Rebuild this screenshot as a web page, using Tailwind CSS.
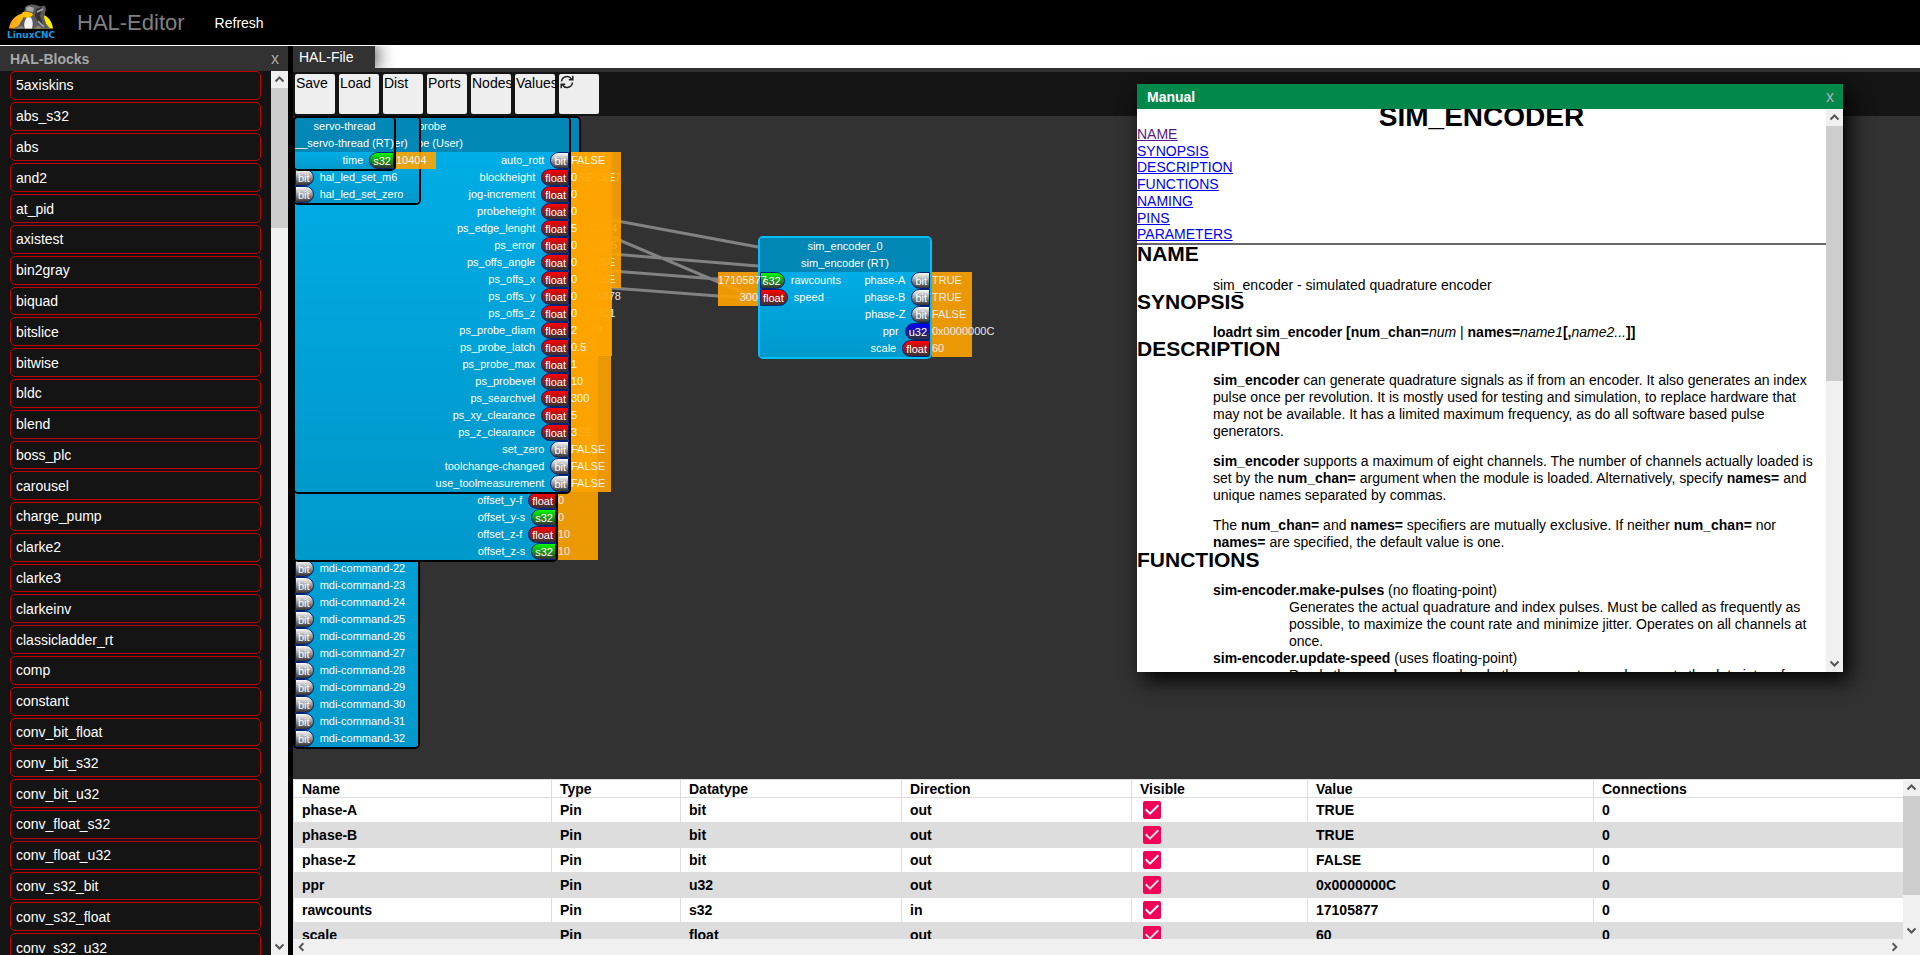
<!DOCTYPE html>
<html lang="en">
<head>
<meta charset="utf-8">
<title>HAL-Editor</title>
<script src="https://cdn.jsdelivr.net/npm/@tailwindcss/browser@4"></script>
</head>
<body class="flex h-screen flex-col overflow-hidden bg-black font-['Liberation_Sans',Arial,sans-serif] text-sm">

<svg class="hidden">
  <symbol id="up" viewBox="0 0 17 17"><path d="M4.500 10.500 8.500 6.500l4 4" fill="none" stroke="#555" stroke-width="2"/></symbol>
  <symbol id="down" viewBox="0 0 17 17"><path d="M4.500 6.500l4 4 4-4" fill="none" stroke="#555" stroke-width="2"/></symbol>
  <symbol id="left" viewBox="0 0 17 17"><path d="M10.500 4.500l-4 4 4 4" fill="none" stroke="#555" stroke-width="2"/></symbol>
  <symbol id="right" viewBox="0 0 17 17"><path d="M6.500 4.500l4 4-4 4" fill="none" stroke="#555" stroke-width="2"/></symbol>
</svg>

<header class="flex h-[46px] shrink-0 items-center border-b border-white bg-black">
  <svg class="ml-[6px] h-[45px] w-[52px]" viewBox="6 0 52 45" role="img" aria-label="LinuxCNC">
    <defs><linearGradient id="sun"><stop offset="0" stop-color="#ffa21a"/><stop offset="1" stop-color="#fff200"/></linearGradient></defs>
    <path d="M9 28.500C10 20 17 12 31 12s21 7 22 16.500z" fill="url(#sun)"/>
    <path d="M14 28.500c2-2 5-2 6-5 0-2 2-3 3-5l2-11c1-2 4-3 7-3 4 0 6 1 8 2l5-1 1 4-2 8 2 6c1 2 3 3 4 5z" fill="#5c5c5c"/>
    <path d="M27 17c-2 3-4 7-2 11.500h7c1-4 1-8-1-11z" fill="#f4f4f4"/>
    <path d="M22 13c2-2 5-1 10 0l1 2c-3 3-7 3-10 2z" fill="#ffc400"/>
    <path d="M26 8c2-2 5-2 8 0l-1 4-6-1z" fill="#a5a5a5"/>
    <path d="M36 9l6-2-2 9 3 8-5-2-3-6z" fill="#333"/>
    <path d="M38 21l6 6M37 12l6-3" stroke="#aaa" stroke-width="1.500"/>
    <path d="M14 28.500l7-3 4 3zM34 28.500l4-3 5 3z" fill="#888"/>
    <text x="7" y="38" font-family="DejaVu Sans" font-weight="bold" font-size="9" fill="#159be0">LinuxCNC</text>
  </svg>
  <h1 class="ml-[19px] text-[22px] leading-6 text-[#808080]">HAL-Editor</h1>
  <button class="ml-[30px] text-sm leading-4 text-white">Refresh</button>
</header>

<div class="flex min-h-0 flex-1">

  <aside class="flex w-[293px] shrink-0 flex-col border-r-[5px] border-black bg-[#141414]">
    <div class="flex h-[25px] shrink-0 items-center justify-between bg-[#323232] pr-[9px] pl-[10px] text-[#a8a8a8]">
      <h2 class="text-sm font-bold">HAL-Blocks</h2>
      <button aria-label="Close blocks" class="text-base leading-4">x</button>
    </div>
    <div class="flex min-h-0 flex-1 overflow-hidden">
      <div id="blocks" class="mx-[10px] grid h-[891px] flex-1 auto-rows-fr gap-[2px]"></div>
      <div class="flex w-[17px] flex-col bg-[#f0f0f0]">
        <svg class="size-[17px]"><use href="#up"/></svg>
        <div class="h-[140px] bg-[#cdcdcd]"></div>
        <svg class="mt-auto size-[17px]"><use href="#down"/></svg>
      </div>
    </div>
  </aside>

  <main class="flex min-w-0 flex-1 flex-col bg-[#323232]">
    <nav class="flex h-[22px] shrink-0 overflow-hidden bg-white">
      <button class="bg-[#323232] pr-[22px] pl-[6px] text-sm leading-[22px] text-white shadow-[0_0_20px_#000]">HAL-File</button>
    </nav>
    <div class="mt-1 flex h-11 shrink-0 gap-1 bg-[#141414] py-[2px] pl-[2px] text-sm leading-4 text-black">
      <button class="flex size-10 rounded-xs bg-[#eee] py-px pl-px">Save</button>
      <button class="flex size-10 rounded-xs bg-[#eee] py-px pl-px">Load</button>
      <button class="flex size-10 rounded-xs bg-[#eee] py-px pl-px">Dist</button>
      <button class="flex size-10 rounded-xs bg-[#eee] py-px pl-px">Ports</button>
      <button class="flex size-10 rounded-xs bg-[#eee] py-px pl-px">Nodes</button>
      <button class="flex size-10 rounded-xs bg-[#eee] py-px pl-px">Values</button>
      <button aria-label="Reload" class="flex size-10 rounded-xs bg-[#eee] py-px pl-px">
        <svg class="h-[14px] w-[14px]" viewBox="0 0 14 14" fill="none" stroke="#222" stroke-width="1.500"><path d="M1.500 6.500a5.500 5.500 0 0 1 10-2.500M12.500 7.500a5.500 5.500 0 0 1-10 2.500M12.800.8v4H8.800M1.200 13.200v-4h4"/></svg>
      </button>
    </div>

    <section id="canvas" class="relative min-h-0 flex-1 overflow-hidden">
      <svg class="absolute inset-0 size-full" stroke="#828282" stroke-width="3">
        <path d="M265 94 319 104 465 131M319 138 465 150M319 121 449 176 465 182M319 155 424 163 465 165M319 172 425 180 465 182" fill="none"/>
      </svg>
    </section>

    <section class="flex h-[176px] shrink-0 flex-col bg-[#f0f0f0]">
      <div class="flex min-h-0 flex-1">
        <div class="min-w-0 flex-1 overflow-hidden bg-white">
          <table class="w-full table-fixed border-collapse border-l border-[#ddd] text-left text-sm font-bold text-black">
            <thead>
              <tr class="h-[18px] border-y border-[#ddd] leading-4">
                <th class="w-[258px] border-r border-[#ddd] px-2">Name</th>
                <th class="w-[129px] border-r border-[#ddd] px-2">Type</th>
                <th class="w-[221px] border-r border-[#ddd] px-2">Datatype</th>
                <th class="w-[230px] border-r border-[#ddd] px-2">Direction</th>
                <th class="w-[176px] border-r border-[#ddd] px-2">Visible</th>
                <th class="w-[286px] border-r border-[#ddd] px-2">Value</th>
                <th class="px-2">Connections</th>
              </tr>
            </thead>
            <tbody id="pins"></tbody>
          </table>
        </div>
        <div class="flex w-[17px] flex-col">
          <svg class="size-[17px]"><use href="#up"/></svg>
          <div class="h-[99px] bg-[#cdcdcd]"></div>
          <svg class="mt-auto size-[17px]"><use href="#down"/></svg>
        </div>
      </div>
      <div class="flex h-4 shrink-0 justify-between pr-[17px]">
        <svg class="h-4 w-[17px]"><use href="#left"/></svg>
        <svg class="h-4 w-[17px]"><use href="#right"/></svg>
      </div>
    </section>
  </main>
</div>

<section role="dialog" aria-labelledby="manual-title" class="absolute top-[84px] right-[77px] flex h-[588px] w-[706px] flex-col bg-white text-black shadow-[6px_8px_20px_#000]">
  <div class="flex h-[25px] shrink-0 items-center justify-between bg-[#02884a] pr-[9px] pl-[10px]">
    <h2 id="manual-title" class="text-sm font-bold text-white">Manual</h2>
    <button aria-label="Close manual" class="text-base leading-4 text-[#b0b0b0]">x</button>
  </div>
  <div class="flex min-h-0 flex-1 overflow-hidden">
    <article class="min-w-0 flex-1 text-sm leading-[17px]">
      <h1 class="mb-px text-center text-[28px] leading-4 font-bold">SIM_ENCODER</h1>
      <nav class="grid h-[117px] auto-rows-fr justify-items-start text-[#0000ee] underline">
        <a href="#m-name" class="text-[#551a8b]">NAME</a>
        <a href="#m-synopsis">SYNOPSIS</a>
        <a href="#m-description">DESCRIPTION</a>
        <a href="#m-functions">FUNCTIONS</a>
        <a href="#m-functions">NAMING</a>
        <a href="#m-functions">PINS</a>
        <a href="#m-functions">PARAMETERS</a>
      </nav>
      <hr class="border-t-2 border-[#666]">
      <h2 id="m-name" class="text-[21px] leading-[18px] font-bold">NAME</h2>
      <p class="mt-[14px] pl-[76px] leading-4">sim_encoder - simulated quadrature encoder</p>
      <h2 id="m-synopsis" class="text-[21px] leading-[18px] font-bold">SYNOPSIS</h2>
      <p class="mt-[13px] pl-[76px] leading-4"><b>loadrt sim_encoder [num_chan=</b><i>num</i> | <b>names=</b><i>name1</i><b>[,</b><i>name2...</i><b>]]</b></p>
      <h2 id="m-description" class="text-[21px] leading-[18px] font-bold">DESCRIPTION</h2>
      <p class="mt-[14px] pl-[76px]"><b>sim_encoder</b> can generate quadrature signals as if from an encoder. It also generates an index pulse once per revolution. It is mostly used for testing and simulation, to replace hardware that may not be available. It has a limited maximum frequency, as do all software based pulse generators.</p>
      <p class="mt-[13px] pl-[76px]"><b>sim_encoder</b> supports a maximum of eight channels. The number of channels actually loaded is set by the <b>num_chan=</b> argument when the module is loaded. Alternatively, specify <b>names=</b> and unique names separated by commas.</p>
      <p class="mt-[13px] pl-[76px]">The <b>num_chan=</b> and <b>names=</b> specifiers are mutually exclusive. If neither <b>num_chan=</b> nor <b>names=</b> are specified, the default value is one.</p>
      <h2 id="m-functions" class="text-[21px] leading-[18px] font-bold">FUNCTIONS</h2>
      <dl class="mt-[13px] pl-[76px]">
        <dt><b>sim-encoder.make-pulses</b> (no floating-point)</dt>
        <dd class="pl-[76px]">Generates the actual quadrature and index pulses. Must be called as frequently as possible, to maximize the count rate and minimize jitter. Operates on all channels at once.</dd>
        <dt><b>sim-encoder.update-speed</b> (uses floating-point)</dt>
        <dd class="pl-[76px]">Reads the <b>speed</b> command and other parameters and converts the data into a form</dd>
      </dl>
    </article>
    <div class="flex w-[17px] flex-col bg-[#f0f0f0]">
      <svg class="size-[17px]"><use href="#up"/></svg>
      <div class="h-[255px] bg-[#cdcdcd]"></div>
      <svg class="mt-auto size-[17px]"><use href="#down"/></svg>
    </div>
  </div>
</section>

<script>
const blocks = ['5axiskins','abs_s32','abs','and2','at_pid','axistest','bin2gray','biquad','bitslice','bitwise','bldc','blend','boss_plc','carousel','charge_pump','clarke2','clarke3','clarkeinv','classicladder_rt','comp','constant','conv_bit_float','conv_bit_s32','conv_bit_u32','conv_float_s32','conv_float_u32','conv_s32_bit','conv_s32_float','conv_s32_u32'];
document.getElementById('blocks').innerHTML = blocks.map(b =>
  `<button class="flex items-center rounded-[5px] border border-[#c40000] pl-[5px] text-left text-sm leading-4 text-white">${b}</button>`).join('');

const pins = [['phase-A','bit','out','TRUE'],['phase-B','bit','out','TRUE'],['phase-Z','bit','out','FALSE'],['ppr','u32','out','0x0000000C'],['rawcounts','s32','in','17105877'],['scale','float','out','60']];
const cell = t => `<td class="border-r border-[#ddd] px-2">${t}</td>`;
document.getElementById('pins').innerHTML = pins.map(([n, t, d, v]) =>
  `<tr class="group h-[25px] border-b border-[#ddd] leading-4 even:bg-[#ddd]">${cell(n)}${cell('Pin')}${cell(t)}${cell(d)}
   <td class="border-r border-[#ddd] px-2"><label class="relative ml-[3px] block size-[18px]">
     <input type="checkbox" checked aria-label="${n} visible" class="block size-[18px] appearance-none rounded-xs bg-[#f50057]">
     <svg class="pointer-events-none absolute inset-0 size-[18px] fill-white group-even:fill-[#ddd]" viewBox="3 3 18 18"><path d="M10 17l-5-5 1.410-1.410L10 14.170l7.590-7.590L19 8z"/></svg>
   </label></td>${cell(v)}<td class="px-2">0</td></tr>`).join('');

const tones = {
  bit: 'from-white to-[#333]',
  float: 'from-[#ff0000] to-[#333]',
  s32: 'from-[#00ff00] to-[#333]',
  u32: 'from-[#0000ff] to-[#333]'
};
const port = (type, side) => `<span class="flex h-[17px] items-center border border-[#00237a] bg-linear-to-b/srgb pt-px leading-3 ${tones[type]} ${side === 'in' ? 'rounded-r-full pr-[3px] pl-[2px]' : 'rounded-l-full pr-[2px] pl-[3px]'}">${type}</span>`;
const inRow = ([name, type]) => `<li class="flex h-[17px] items-center gap-[6px]">${name ? port(type, 'in') + `<span>${name}</span>` : ''}</li>`;
const outRow = ([name, type]) => `<li class="flex h-[17px] items-center justify-end gap-[6px]">${name ? `<span>${name}</span>` + port(type, 'out') : ''}</li>`;
const valueRow = v => `<li class="h-[17px] leading-[17px]">${v}</li>`;

function node({x = 0, y = 0, w, rows, title = '', sub = '', ins = [], outs = [], left = [], right = [], selected = false}) {
  return `<div class="absolute text-[11px] whitespace-nowrap text-white" style="left:${x}px;top:${y}px;width:${w}px">
    <div class="rounded-[5px] border-2 ${selected ? 'border-[#00bfff]' : 'border-black'} overflow-hidden">
      <div class="grid h-[34px] grid-rows-2 justify-items-center bg-[#0087b5] leading-[17px]"><span>${title}</span><span>${sub}</span></div>
      <div class="relative bg-linear-to-b/srgb from-[#00ade6] to-[#0099cc]" style="height:${rows * 17}px">
        <ul class="absolute top-0 left-0">${ins.map(inRow).join('')}</ul>
        <ul class="absolute top-0 right-0">${outs.map(outRow).join('')}</ul>
      </div>
    </div>
    ${left.length ? `<ul class="absolute top-9 right-full w-10 bg-[#ffa500] text-right opacity-90">${left.map(valueRow).join('')}</ul>` : ''}
    ${right.length ? `<ul class="absolute top-9 left-full w-10 bg-[#ffa500] opacity-90">${right.map(valueRow).join('')}</ul>` : ''}
  </div>`;
}

const blank = n => Array(n).fill('');
const none = n => Array(n).fill(['']);
const nodes = [
  {w: 127, rows: 35, ins: [...none(24), ...Array.from({length: 11}, (_, i) => [`mdi-command-${22 + i}`, 'bit'])]},
  {w: 279, rows: 12, right: ['', '17105877', '', '', '0.112394', '0.112395', '', '', '17105878', '-0.12301', '45678', '']},
  {w: 288, rows: 9, right: ['', 'FALSE', '', '', '', '', 'FALSE', 'FALSE']},
  {w: 265, rows: 24, outs: [...none(20), ['offset_y-f', 'float'], ['offset_y-s', 's32'], ['offset_z-f', 'float'], ['offset_z-s', 's32']],
   right: ['', 'FALSE', ...blank(14), 'FALSE', '', '', '', '0', '0', '10', '10']},
  {w: 278, rows: 20, title: 'probe', sub: 'probe (User)',
   outs: [['auto_rott','bit'],['blockheight','float'],['jog-increment','float'],['probeheight','float'],['ps_edge_lenght','float'],['ps_error','float'],['ps_offs_angle','float'],['ps_offs_x','float'],['ps_offs_y','float'],['ps_offs_z','float'],['ps_probe_diam','float'],['ps_probe_latch','float'],['ps_probe_max','float'],['ps_probevel','float'],['ps_searchvel','float'],['ps_xy_clearance','float'],['ps_z_clearance','float'],['set_zero','bit'],['toolchange-changed','bit'],['use_toolmeasurement','bit']],
   right: ['FALSE','0','0','0','5','0','0','0','0','0','2','0.5','1','10','300','5','3','FALSE','FALSE','FALSE']},
  {w: 128, rows: 3, sub: 'gladevcp_tool (User)', ins: [[''], ['hal_led_set_m6', 'bit'], ['hal_led_set_zero', 'bit']]},
  {w: 103, rows: 1, title: 'servo-thread', sub: '__servo-thread (RT)', outs: [['time', 's32']], right: ['10404']},
  {x: 465, y: 120, w: 174, rows: 5, selected: true, title: 'sim_encoder_0', sub: 'sim_encoder (RT)',
   ins: [['rawcounts', 's32'], ['speed', 'float']], outs: [['phase-A', 'bit'], ['phase-B', 'bit'], ['phase-Z', 'bit'], ['ppr', 'u32'], ['scale', 'float']],
   left: ['17105877', '300'], right: ['TRUE', 'TRUE', 'FALSE', '0x0000000C', '60']}
];
document.getElementById('canvas').insertAdjacentHTML('beforeend', nodes.map(node).join(''));
</script>
</body>
</html>
